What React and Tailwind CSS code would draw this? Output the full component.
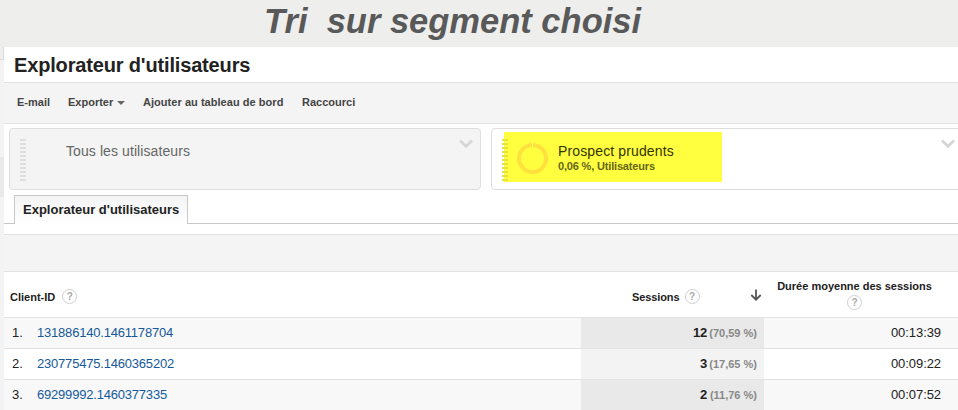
const rows = [
  { n: '1.', id: '131886140.1461178704', sessions: '12', pct: '(70,59 %)', time: '00:13:39' },
  { n: '2.', id: '230775475.1460365202', sessions: '3', pct: '(17,65 %)', time: '00:09:22' },
  { n: '3.', id: '69299992.1460377335', sessions: '2', pct: '(11,76 %)', time: '00:07:52' },
];

function Help() {
  return (
    <span className="flex size-[15px] shrink-0 items-center justify-center rounded-full border border-[#cfcfcf] bg-white text-[10px] leading-none font-bold text-[#a8a8a8]">
      ?
    </span>
  );
}

function Chevron() {
  return (
    <svg className="shrink-0" width="14" height="10" viewBox="0 0 14 10" fill="none" stroke="#d6d6d6" strokeWidth="2.8">
      <path d="M1 1.5 7 7.3 13 1.5" />
    </svg>
  );
}

function Grip({ className }) {
  return (
    <div className={'flex h-[43px] w-1.5 flex-col gap-0.5 ' + className}>
      {Array.from({ length: 11 }, (_, i) => (
        <span key={i} className="h-0.5 shrink-0 bg-current" />
      ))}
    </div>
  );
}

export default function App() {
  return (
    <div className="flex h-[410px] w-[958px] flex-col overflow-hidden bg-[#eeeeed] font-['Liberation_Sans',Arial,sans-serif] text-[#222]">
      <header className="h-[47px] shrink-0 pl-[264px]">
        <h1 className="pt-[1px] text-[34.5px] leading-[41px] font-bold whitespace-pre text-[#595959] italic">Tri  sur segment choisi</h1>
      </header>
      <div className="flex min-h-0 flex-1">
        <aside className="flex w-1 shrink-0 flex-col bg-[#f3f3f3]">
          <div className="h-[13px] border-r border-b border-[#dcdcdc] bg-[#eeeeed]" />
          <div className="mt-[97px] h-10 bg-[#e9e9e9]" />
        </aside>
        <main className="min-w-0 flex-1 bg-white">
          <h2 className="h-9 border-b border-[#e2e2e2] pl-2.5 text-[20px] leading-9 font-bold tracking-[-0.16px] whitespace-nowrap">Explorateur d'utilisateurs</h2>
          <nav className="flex h-[41px] items-center border-b border-[#e2e2e2] bg-[#f4f4f4] pb-0.5 pl-[13px] text-[11px] font-bold whitespace-nowrap text-[#444]">
            <span className="w-[51px]">E-mail</span>
            <span className="flex w-[75px] items-center gap-1">
              Exporter
              <span className="mt-px border-x-4 border-t-4 border-x-transparent border-t-[#666]" />
            </span>
            <span className="w-[159px] tracking-[0.04px]">Ajouter au tableau de bord</span>
            <span>Raccourci</span>
          </nav>
          <section className="flex h-[71px] gap-2.5 overflow-hidden pt-1 pl-[5px]">
            <div className="flex h-[62px] w-[472px] shrink-0 rounded border border-[#dedede] bg-[#f4f4f4]">
              <Grip className="mt-2.5 ml-2.5 text-[#dedede]" />
              <div className="mt-3.5 ml-10 flex-1 text-[14px] leading-4 tracking-[0.09px] text-[#666]">Tous les utilisateurs</div>
              <div className="mt-2.5 mr-[7px]"><Chevron /></div>
            </div>
            <div className="flex h-[62px] w-[472px] shrink-0 rounded border border-[#dedede] bg-white">
              <div className="mt-[3px] ml-3 flex h-[50px] w-[218px] bg-[#ffff3f]">
                <Grip className="mt-[7px] -ml-0.5 text-[#e4e43c]" />
                <svg className="mt-[10px] ml-[9px] shrink-0" width="32" height="32" viewBox="0 0 32 32">
                  <circle cx="15.5" cy="16.5" r="13.5" fill="none" stroke="#ffe13d" strokeWidth="4" />
                  <path d="M15.5 0v5" stroke="#ffff70" strokeWidth="1" />
                </svg>
                <div className="ml-[9px] pt-[11px] whitespace-nowrap">
                  <div className="text-[14px] leading-4 tracking-[0.13px] text-[#333300]">Prospect prudents</div>
                  <div className="text-[11px] leading-[14px] font-bold tracking-[-0.17px] text-[#666619]">0,06 %, Utilisateurs</div>
                </div>
              </div>
              <div className="mt-2.5 ml-[219px]"><Chevron /></div>
            </div>
          </section>
          <div className="flex h-[29px] items-stretch">
            <div className="w-2.5 border-b border-[#c8c8c8]" />
            <div className="w-[174px] border border-b-0 border-[#c8c8c8] bg-linear-to-b from-[#f4f4f4] to-white pl-2 text-[13px] leading-7 font-bold whitespace-nowrap">Explorateur d'utilisateurs</div>
            <div className="flex-1 border-b border-[#c8c8c8]" />
          </div>
          <div className="mt-2.5 h-[38px] border-y border-[#e2e2e2] bg-[#f4f4f4]" />
          <div className="flex h-[46px] border-b border-[#e2e2e2] text-[11px] font-bold whitespace-nowrap">
            <div className="flex w-[577px] items-center pt-1 pl-1.5">
              <span className="mt-0.5 mr-[7px]">Client-ID</span>
              <Help />
            </div>
            <div className="flex w-[183px] items-center pt-1 pl-[51px]">
              <span className="mt-0.5 mr-[5px] tracking-[-0.1px]">Sessions</span>
              <Help />
              <svg className="mt-[-4px] ml-[50px] shrink-0" width="12" height="12" viewBox="0 0 12 12" fill="none" stroke="#555" strokeWidth="1.8">
                <path d="M6 0.5V10M1.3 6 6 10.7 10.7 6" />
              </svg>
            </div>
            <div className="flex w-[181px] flex-col items-center pt-[7px] leading-[15px]">
              <span>Durée moyenne des sessions</span>
              <span className="mt-px"><Help /></span>
            </div>
          </div>
          {rows.map((r, i) => (
            <div key={r.n} className={'flex h-[31px] border-b border-[#e2e2e2] text-[13px] leading-[29px] whitespace-nowrap ' + (i % 2 ? 'bg-white' : 'bg-[#f8f8f8]')}>
              <div className="w-[33px] pl-2">{r.n}</div>
              <div className="w-[544px] tracking-[-0.2px] text-[#15599b]">{r.id}</div>
              <div className={'flex w-[183px] pr-[7px] ' + (i % 2 ? 'bg-[#f3f3f3]' : 'bg-[#e9e9e9]')}>
                <span className="w-[126px] text-right font-bold tracking-[-0.2px]">{r.sessions}</span>
                <span className="flex-1 text-right text-[11px] leading-[31px] font-bold text-[#888]">{r.pct}</span>
              </div>
              <div className="w-[177px] text-right tracking-[-0.07px]">{r.time}</div>
            </div>
          ))}
        </main>
      </div>
    </div>
  );
}
